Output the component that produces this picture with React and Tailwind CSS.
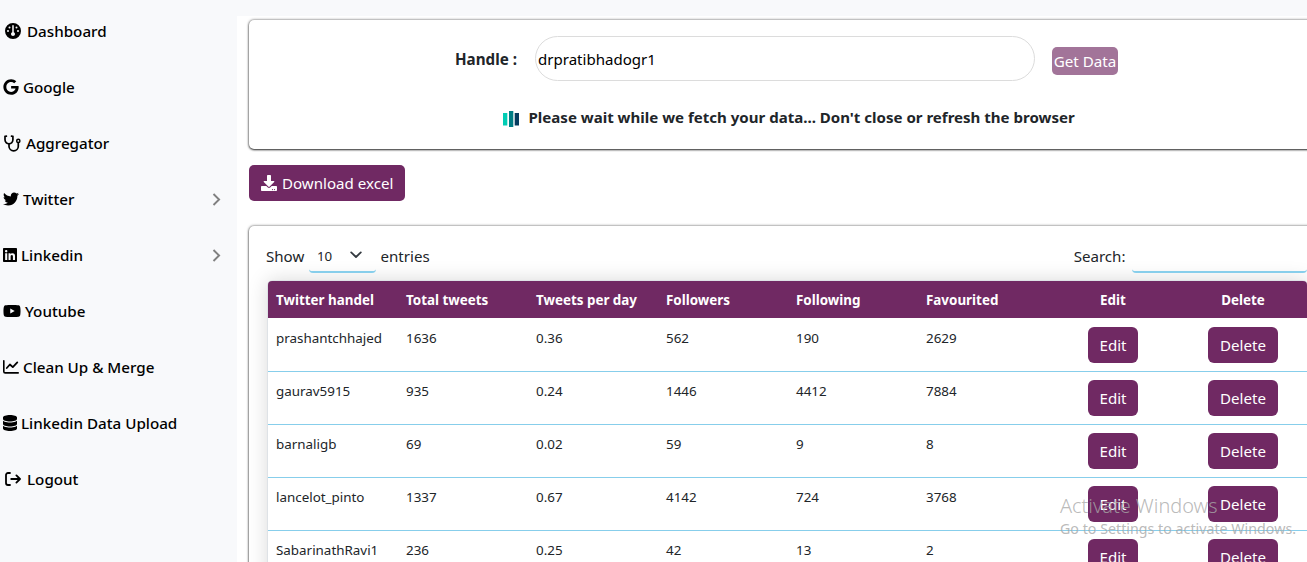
import { FaGauge, FaGoogle, FaTwitter, FaLinkedin, FaYoutube, FaDatabase } from "react-icons/fa6";
import { FaDownload } from "react-icons/fa";

function Stethoscope() {
  return (
    <svg width="17" height="17" viewBox="0 0 17 17" fill="none" stroke="currentColor" strokeWidth="1.7" strokeLinecap="round">
      <path d="M2.4 1.1 1 1.4v3.4a3.9 3.9 0 0 0 7.9 0V1.4L7.5 1.1" />
      <path d="M5 8.9v2.3a4.6 4.6 0 0 0 9.3 0V7.6" />
      <circle cx="14.3" cy="5.9" r="1.6" strokeWidth="1.5" />
    </svg>
  );
}

function LineChart() {
  return (
    <svg width="16" height="14" viewBox="0 0 16 14" fill="none" stroke="currentColor" strokeLinecap="round" strokeLinejoin="round">
      <path d="M.8.8v10.7q0 1.4 1.4 1.4h13" strokeWidth="1.6" />
      <path d="m3.8 8 3.1-3.5 2.9 2.6L14.3 2.4" strokeWidth="1.8" />
    </svg>
  );
}

function Logout() {
  return (
    <svg width="16" height="14" viewBox="0 0 16 14" fill="none" stroke="currentColor" strokeWidth="1.8" strokeLinecap="round" strokeLinejoin="round">
      <path d="M5 1H3a2 2 0 0 0-2 2v8a2 2 0 0 0 2 2h2M6.2 7h8.6M11.4 3.4 15 7l-3.6 3.6" />
    </svg>
  );
}

const menu = [
  { label: "Dashboard", icon: <FaGauge size={16} />, pad: "pl-[5px]", gap: "gap-[6px]" },
  { label: "Google", icon: <FaGoogle size={16} />, pad: "pl-[3px]", gap: "gap-[4px]" },
  { label: "Aggregator", icon: <Stethoscope />, pad: "pl-[4px]", gap: "gap-[5px]" },
  { label: "Twitter", icon: <FaTwitter size={16} />, pad: "pl-[3px]", gap: "gap-[4px]", arrow: true },
  { label: "Linkedin", icon: <FaLinkedin size={16} className="w-[14px]" />, pad: "pl-[3px]", gap: "gap-[4px]", arrow: true },
  { label: "Youtube", icon: <FaYoutube size={18} />, pad: "pl-[3px]", gap: "gap-[4px]" },
  { label: "Clean Up & Merge", icon: <LineChart />, pad: "pl-[3px]", gap: "gap-[4px]" },
  { label: "Linkedin Data Upload", icon: <FaDatabase size={16} className="w-[14px]" />, pad: "pl-[3px]", gap: "gap-[4px]" },
  { label: "Logout", icon: <Logout />, pad: "pl-[5px]", gap: "gap-[6px]" },
];

const headers = ["Twitter handel", "Total tweets", "Tweets per day", "Followers", "Following", "Favourited"];

const rows = [
  ["prashantchhajed", "1636", "0.36", "562", "190", "2629"],
  ["gaurav5915", "935", "0.24", "1446", "4412", "7884"],
  ["barnaligb", "69", "0.02", "59", "9", "8"],
  ["lancelot_pinto", "1337", "0.67", "4142", "724", "3768"],
  ["SabarinathRavi1", "236", "0.25", "42", "13", "2"],
];

function Sidebar() {
  return (
    <nav className="w-[237px] shrink-0 bg-[#f8f9fb] pt-[3px] text-[15.2px] font-medium text-black">
      {menu.map((m) => (
        <div key={m.label} className={`flex h-14 items-center pr-4 ${m.pad} ${m.gap}`}>
          {m.icon}
          <span className="whitespace-nowrap">{m.label}</span>
          {m.arrow && (
            <svg className="ml-auto" width="9" height="13" viewBox="0 0 9 13" fill="none" stroke="#808080" strokeWidth="1.9">
              <path d="m1.5 1 5.6 5.5L1.5 12" />
            </svg>
          )}
        </div>
      ))}
    </nav>
  );
}

function FetchCard() {
  return (
    <section className="h-[129px] rounded-[5px] bg-white shadow-[0_0_3px_rgba(0,0,0,0.6),0_1px_2px_rgba(0,0,0,0.7)]">
      <div className="flex pt-[16px] pl-[206px]">
        <label className="w-20 pt-[11px] text-[15.2px] leading-6 font-bold">Handle :</label>
        <input
          readOnly
          value="drpratibhadogr1"
          className="h-[45px] w-[500px] rounded-[23px] border border-[#dcdcdc] bg-white px-[2px] pt-px text-[15.05px] text-black outline-none"
        />
        <button className="mt-[11px] ml-[17px] h-7 w-[66px] rounded-[5px] bg-[#a27499] text-[15.2px] whitespace-nowrap text-white">
          Get Data
        </button>
      </div>
      <div className="flex items-start pt-[24px] pl-[254px]">
        <svg width="16" height="16" viewBox="0 0 16 16" className="mt-[6px]">
          <rect x="0" y="2" width="4.3" height="12.5" fill="#00cdb4" />
          <rect x="6" y="0" width="4.3" height="16" fill="#007d85" />
          <rect x="11.7" y="2" width="4.3" height="12.5" fill="#063b5e" />
        </svg>
        <span className="ml-[9.5px] text-[15.05px] leading-6 font-bold whitespace-nowrap">
          Please wait while we fetch your data... Don't close or refresh the browser
        </span>
      </div>
    </section>
  );
}

function TableControls() {
  return (
    <div className="flex h-[38px] w-[1041px] items-start text-[15.1px]">
      <span className="w-[43px] pt-[9px] leading-6">Show</span>
      <div className="flex h-[38px] w-[67px] items-center justify-between rounded border-b-2 border-[#87ceeb] pt-[8px] pr-[14px] pl-2 text-[13.3px]">
        <span>10</span>
        <svg width="12" height="8" viewBox="0 0 12 8" fill="none" stroke="#343a40" strokeWidth="1.8" strokeLinecap="round" strokeLinejoin="round" className="mb-[4px]">
          <path d="m1.2 1.4 4.8 4.6 4.8-4.6" />
        </svg>
      </div>
      <span className="ml-[4.5px] pt-[9px] leading-6">entries</span>
      <span className="mr-[6.5px] ml-auto pt-[9px] leading-6">Search:</span>
      <div className="h-[38px] w-[175px] rounded border-b-2 border-[#87ceeb]" />
    </div>
  );
}

function ActionButton({ width, children }) {
  return <button className={`h-9 rounded-md bg-[#702963] text-[15.1px] text-white ${width}`}>{children}</button>;
}

function DataTable() {
  return (
    <div className="w-[1041px] rounded-t-md border border-b-0 border-[#dee2e6] bg-white shadow-[0_0_20px_rgba(0,0,0,0.15)]">
      <div className="grid h-[37px] grid-cols-[repeat(8,130px)] items-center overflow-hidden rounded-t-[4px] bg-[#702963] pt-[2px] text-[13.4px] font-bold text-white">
        {headers.map((h) => (
          <span key={h} className="pl-2 whitespace-nowrap">{h}</span>
        ))}
        <span className="text-center">Edit</span>
        <span className="text-center">Delete</span>
      </div>
      {rows.map((r) => (
        <div key={r[0]} className="grid h-[53px] grid-cols-[repeat(8,130px)] text-[13.4px] shadow-[0_1px_0_#87ceeb]">
          {r.map((c, i) => (
            <span key={i} className="pt-[10px] pl-2 leading-[21px]">{c}</span>
          ))}
          <div className="pt-[9px] text-center"><ActionButton width="w-[50px]">Edit</ActionButton></div>
          <div className="pt-[9px] text-center"><ActionButton width="w-[70px]">Delete</ActionButton></div>
        </div>
      ))}
    </div>
  );
}

export default function App() {
  return (
    <div className="relative flex h-[562px] w-[1307px] overflow-hidden bg-white font-['Noto_Sans',sans-serif] text-[#212529]">
      <Sidebar />
      <main className="flex w-[1070px] shrink-0 flex-col">
        <div className="h-4 shrink-0 bg-[#f8f9fb]" />
        <div className="w-[1083px] pt-[4px] pl-3">
          <FetchCard />
          <button className="mt-[16px] flex h-9 w-[156px] items-center gap-[5px] rounded-[5px] bg-[#702963] pl-3 text-[15.1px] whitespace-nowrap text-white">
            <FaDownload size={16} />
            Download excel
          </button>
          <section className="mt-[25px] h-[420px] rounded-[5px] bg-white pt-[9px] pl-[17px] shadow-[0_0_3px_rgba(0,0,0,0.6),0_1px_2px_rgba(0,0,0,0.7)]">
            <TableControls />
            <div className="mt-[7px] ml-px">
              <DataTable />
            </div>
          </section>
        </div>
      </main>
      <div className="pointer-events-none absolute top-[492px] left-[1060px] whitespace-nowrap text-[#a8a8a8]/80">
        <div className="text-[19.9px] leading-7 font-light">Activate Windows</div>
        <div className="text-[14.25px] leading-[18px]">Go to Settings to activate Windows.</div>
      </div>
    </div>
  );
}
